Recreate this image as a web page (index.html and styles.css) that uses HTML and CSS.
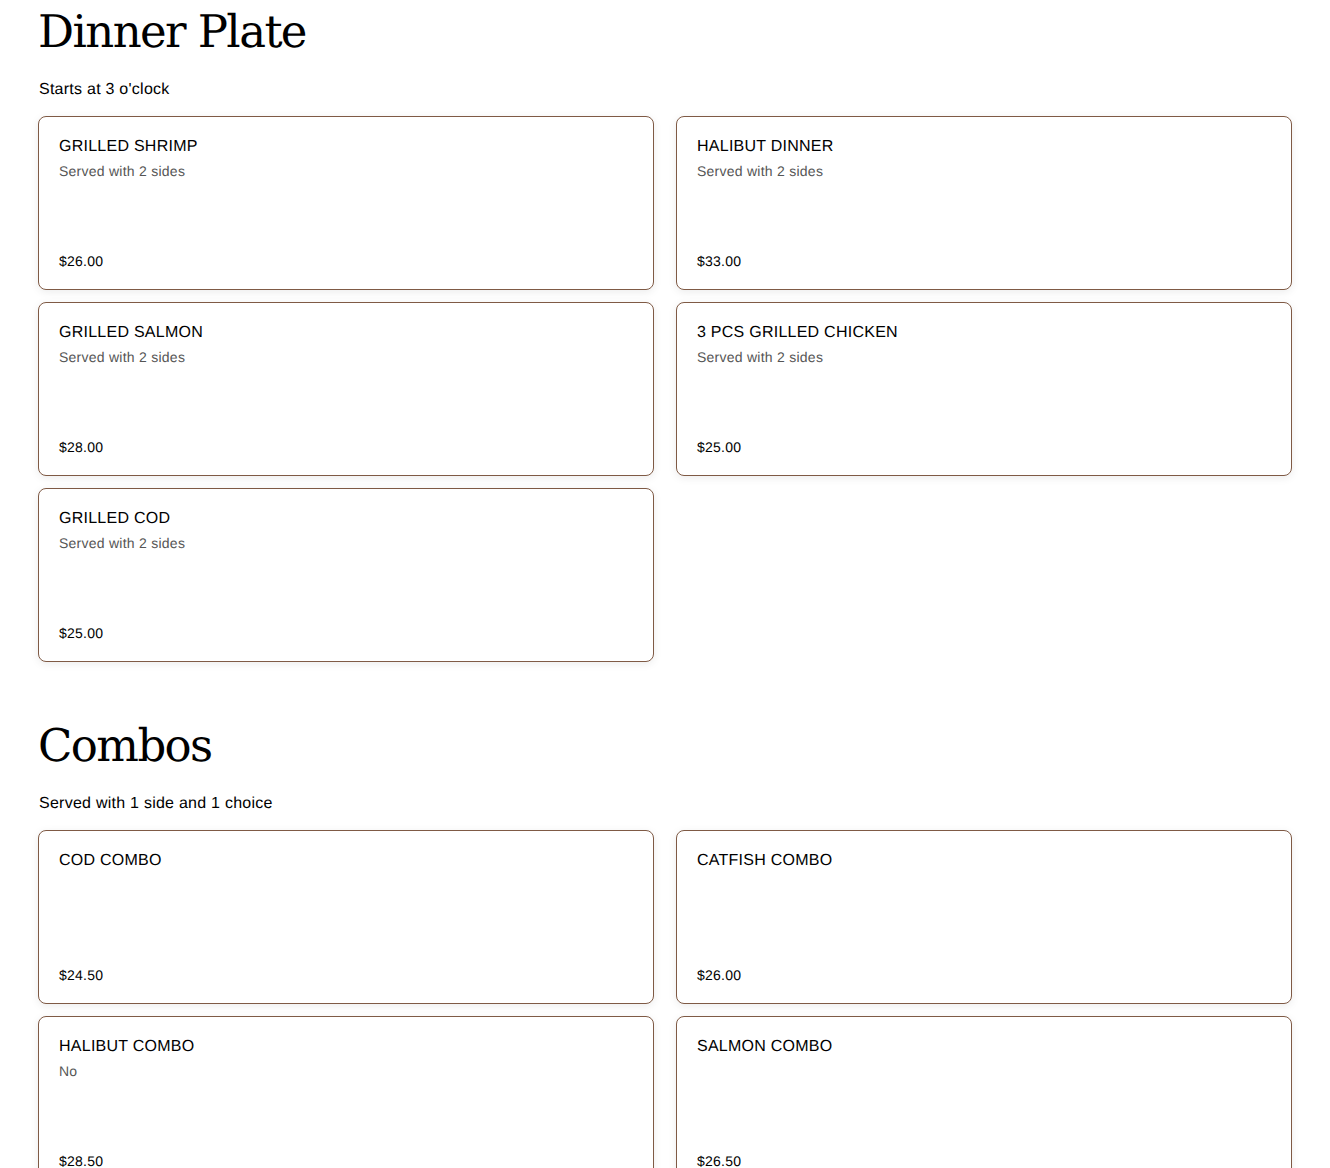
FILE: index.html
```html
<html>
  <head>
    <link rel="stylesheet" href="styles.css">
  </head>
  <body>
    <div class="menu">
      <section class="group">
        <h2 class="group-title">Dinner Plate</h2>
        <p class="group-note">Starts at 3 o'clock</p>
        <div class="items">
          <div class="item">
            <div class="item-name">GRILLED SHRIMP</div>
            <div class="item-desc">Served with 2 sides</div>
            <div class="item-price">$26.00</div>
          </div>
          <div class="item">
            <div class="item-name">HALIBUT DINNER</div>
            <div class="item-desc">Served with 2 sides</div>
            <div class="item-price">$33.00</div>
          </div>
          <div class="item">
            <div class="item-name">GRILLED SALMON</div>
            <div class="item-desc">Served with 2 sides</div>
            <div class="item-price">$28.00</div>
          </div>
          <div class="item">
            <div class="item-name">3 PCS GRILLED CHICKEN</div>
            <div class="item-desc">Served with 2 sides</div>
            <div class="item-price">$25.00</div>
          </div>
          <div class="item">
            <div class="item-name">GRILLED COD</div>
            <div class="item-desc">Served with 2 sides</div>
            <div class="item-price">$25.00</div>
          </div>
        </div>
      </section>
      <section class="group">
        <h2 class="group-title">Combos</h2>
        <p class="group-note">Served with 1 side and 1 choice</p>
        <div class="items">
          <div class="item">
            <div class="item-name">COD COMBO</div>
            <div class="item-price">$24.50</div>
          </div>
          <div class="item">
            <div class="item-name">CATFISH COMBO</div>
            <div class="item-price">$26.00</div>
          </div>
          <div class="item">
            <div class="item-name">HALIBUT COMBO</div>
            <div class="item-desc">No</div>
            <div class="item-price">$28.50</div>
          </div>
          <div class="item">
            <div class="item-name">SALMON COMBO</div>
            <div class="item-price">$26.50</div>
          </div>
        </div>
      </section>
    </div>
  </body>
</html>
```

FILE: styles.css
```css
html {
    background-color: #fff;
}

body {
    margin: 0;
    height: 1168px;
    overflow: hidden;
    font-family: "Liberation Sans", Arial, sans-serif;
    color: #000;
    text-rendering: geometricPrecision;
    letter-spacing: 0.25px;
}

.menu {
    padding: 0 38px;
}

.group {
    margin-bottom: 52px;
}

.group-title {
    margin: 0;
    height: 62px;
    font-family: "DejaVu Serif", serif;
    font-size: 45px;
    line-height: 64px;
    font-weight: 400;
    letter-spacing: -1.6px;
}

.group-note {
    margin: 18px 0 16px 1px;
    font-size: 16px;
    line-height: 20px;
}

.items {
    display: grid;
    grid-template-columns: 616px 616px;
    column-gap: 22px;
    row-gap: 12px;
}

.item {
    display: flex;
    flex-direction: column;
    height: 174px;
    box-sizing: border-box;
    padding: 21px 20px 21px;
    border: 1px solid #7f5a45;
    border-radius: 8px;
    background-color: #fff;
    box-shadow: 0 2px 8px rgba(0, 0, 0, 0.08);
}

.item-name {
    font-size: 16px;
    line-height: 18px;
}

.item-desc {
    margin-top: 7px;
    font-size: 14px;
    line-height: 16px;
    color: #555;
}

.item-price {
    margin-top: auto;
    font-size: 14px;
    line-height: 14px;
}
```
